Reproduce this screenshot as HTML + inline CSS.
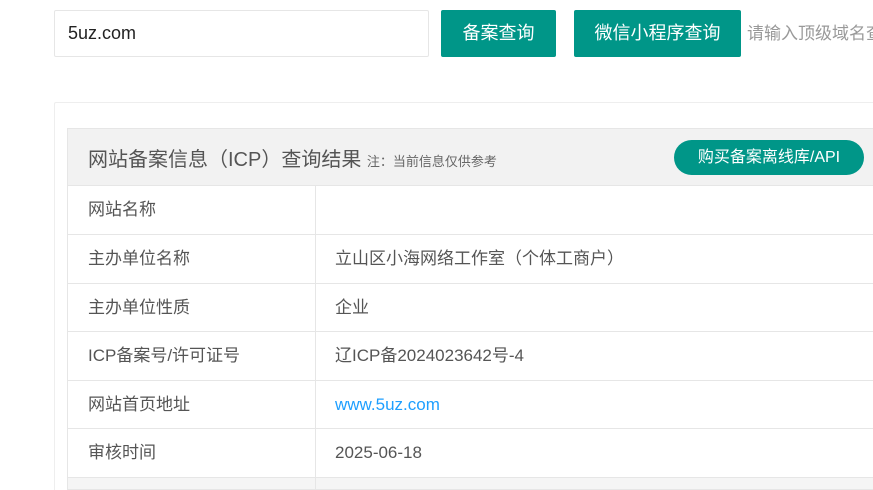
<!DOCTYPE html>
<html style="width:873px;height:490px;overflow:hidden"><head><meta charset="utf-8"><style>
*{margin:0;padding:0;box-sizing:border-box}
body{width:873px;height:490px;overflow:hidden;background:#fff;font-family:"Liberation Sans","Noto Sans CJK SC",sans-serif;position:relative;color:#555}
.abs{position:absolute}
.inp{left:54px;top:10px;width:375px;height:47px;border:1px solid #e6e6e6;border-radius:2px;font-size:18px;color:#222;padding-left:13px;line-height:45px}
.btn{top:10px;height:47px;background:#009688;color:#fff;font-size:18px;line-height:47px;text-align:center;border-radius:2px}
.ph{left:747px;top:10px;line-height:47px;font-size:17px;color:#999;white-space:nowrap}
.card{left:54px;top:102px;width:900px;height:400px;border:1px solid #eee;border-radius:2px}
.hdr{left:67px;top:128px;width:900px;height:58px;background:#f2f2f2;border:1px solid #e6e6e6}
.title{left:88px;top:143px;font-size:20px;color:#555;white-space:nowrap}
.title small{font-size:13px;color:#666}
.api{left:674px;top:140px;width:190px;height:35px;border-radius:18px;background:#009688;color:#fff;font-size:16px;line-height:35px;text-align:center}
.row{left:67px;width:900px;height:49px;border:1px solid #e6e6e6;border-top:none;font-size:17px;line-height:48px}
.row span{position:absolute;left:20px}
.row b{font-weight:normal;position:absolute;left:267px}
.row i{position:absolute;left:247px;top:0;bottom:0;border-left:1px solid #e6e6e6}
</style></head><body>
<div class="abs inp">5uz.com</div>
<div class="abs btn" style="left:441px;width:115px">备案查询</div>
<div class="abs btn" style="left:574px;width:167px">微信小程序查询</div>
<div class="abs ph">请输入顶级域名查询</div>
<div class="abs card"></div>
<div class="abs hdr"></div>
<div class="abs title">网站备案信息（ICP）查询结果 <small>注：当前信息仅供参考</small></div>
<div class="abs api">购买备案离线库/API</div>
<div class="abs row" style="top:186px"><i></i><span>网站名称</span><b></b></div>
<div class="abs row" style="top:235px"><i></i><span>主办单位名称</span><b>立山区小海网络工作室（个体工商户）</b></div>
<div class="abs row" style="top:284px;height:48px"><i></i><span>主办单位性质</span><b>企业</b></div>
<div class="abs row" style="top:332px"><i></i><span>ICP备案号/许可证号</span><b>辽ICP备2024023642号-4</b></div>
<div class="abs row" style="top:381px;height:48px"><i></i><span>网站首页地址</span><b style="color:#1e9fff">www.5uz.com</b></div>
<div class="abs row" style="top:429px"><i></i><span>审核时间</span><b>2025-06-18</b></div>
<div class="abs row" style="top:478px;height:12px;background:#f5f5f5"><i></i></div>
</body></html>
